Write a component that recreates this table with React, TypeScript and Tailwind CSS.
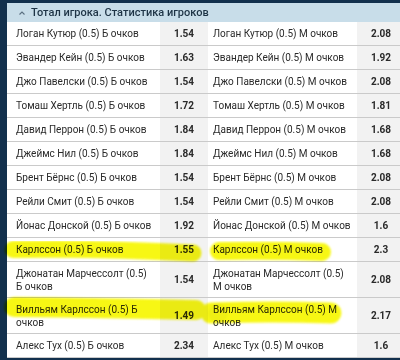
import React from "react";

type Row = {
  left: string;
  leftOdd: string;
  right: string;
  rightOdd: string;
  tall?: boolean;
};

const rows: Row[] = [
  { left: "Логан Кутюр (0.5) Б очков", leftOdd: "1.54", right: "Логан Кутюр (0.5) М очков", rightOdd: "2.08" },
  { left: "Эвандер Кейн (0.5) Б очков", leftOdd: "1.63", right: "Эвандер Кейн (0.5) М очков", rightOdd: "1.92" },
  { left: "Джо Павелски (0.5) Б очков", leftOdd: "1.54", right: "Джо Павелски (0.5) М очков", rightOdd: "2.08" },
  { left: "Томаш Хертль (0.5) Б очков", leftOdd: "1.72", right: "Томаш Хертль (0.5) М очков", rightOdd: "1.81" },
  { left: "Давид Перрон (0.5) Б очков", leftOdd: "1.84", right: "Давид Перрон (0.5) М очков", rightOdd: "1.68" },
  { left: "Джеймс Нил (0.5) Б очков", leftOdd: "1.84", right: "Джеймс Нил (0.5) М очков", rightOdd: "1.68" },
  { left: "Брент Бёрнс (0.5) Б очков", leftOdd: "1.54", right: "Брент Бёрнс (0.5) М очков", rightOdd: "2.08" },
  { left: "Рейли Смит (0.5) Б очков", leftOdd: "1.54", right: "Рейли Смит (0.5) М очков", rightOdd: "2.08" },
  { left: "Йонас Донской (0.5) Б очков", leftOdd: "1.92", right: "Йонас Донской (0.5) М очков", rightOdd: "1.6" },
  { left: "Карлссон (0.5) Б очков", leftOdd: "1.55", right: "Карлссон (0.5) М очков", rightOdd: "2.3" },
  { left: "Джонатан Марчессолт (0.5) Б очков", leftOdd: "1.54", right: "Джонатан Марчессолт (0.5) М очков", rightOdd: "2.08", tall: true },
  { left: "Вилльям Карлссон (0.5) Б очков", leftOdd: "1.49", right: "Вилльям Карлссон (0.5) М очков", rightOdd: "2.17", tall: true },
  { left: "Алекс Тух (0.5) Б очков", leftOdd: "2.34", right: "Алекс Тух (0.5) М очков", rightOdd: "1.6" },
];

const Highlights = () => (
  <svg
    className="absolute left-0 top-0 pointer-events-none mix-blend-multiply"
    width="400"
    height="360"
    viewBox="0 0 400 360"
  >
    <defs>
      <filter id="soft">
        <feGaussianBlur stdDeviation="0.8" />
      </filter>
    </defs>
    <g stroke="#f7f700" strokeLinecap="round" fill="none" filter="url(#soft)" opacity="0.92">
      <path d="M13 249.5 Q 100 248 193 253" strokeWidth="17" />
      <path d="M219 251 Q 270 250 322 252" strokeWidth="18" />
      <path d="M14 307 Q 100 308 196 310" strokeWidth="20" />
      <path d="M211 313 Q 270 311 331 313" strokeWidth="21" />
      <circle cx="218" cy="313" r="10" fill="#eeee00" stroke="none" />
    </g>
  </svg>
);

export default function App() {
  return (
    <div
      className="relative w-[400px] h-[360px] overflow-hidden bg-[#12304d] pt-[3px] pl-[7px]"
      style={{ fontFamily: "Roboto, 'Liberation Sans', sans-serif" }}
    >
      <div className="w-[405px] bg-white">
        <div className="h-[19px] bg-[#c8dde9] flex items-center pl-[12px] gap-[6px] text-[#1e3446]">
          <svg width="6" height="4" viewBox="0 0 6 4" className="mt-[1px]">
            <path d="M0.5 3.5 L3 1 L5.5 3.5" stroke="#5a6f80" strokeWidth="1.1" fill="none" />
          </svg>
          <span className="text-[11px] font-medium leading-none">Тотал игрока. Статистика игроков</span>
        </div>
        {rows.map((r, i) => (
          <div
            key={i}
            className={`grid grid-cols-[153px_48px_149px_48px] border-b border-[#cacaca] text-[10px] text-[#2a2a2a] ${
              r.tall ? "h-[36px]" : "h-[24px]"
            }`}
          >
            <div className="flex items-center pl-[9px] pr-[6px] leading-[13px]">{r.left}</div>
            <div className="flex items-center justify-center bg-[#f2f2f2] font-bold">{r.leftOdd}</div>
            <div className="flex items-center pl-[5px] pr-[6px] leading-[13px]">{r.right}</div>
            <div className="flex items-center justify-center bg-[#f2f2f2] font-bold">{r.rightOdd}</div>
          </div>
        ))}
      </div>
      <Highlights />
    </div>
  );
}
